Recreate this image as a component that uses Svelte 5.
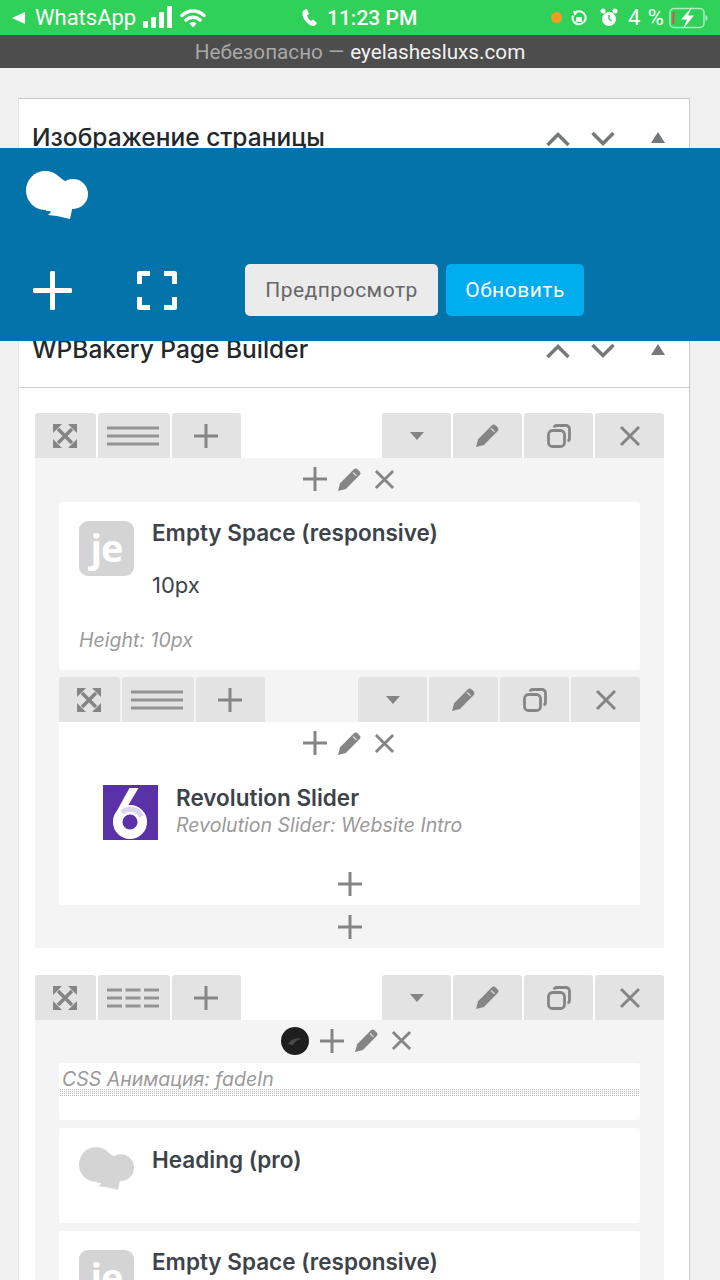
<script>
</script>

{#snippet plus(size)}
	<svg class="ico" width={size} height={size} viewBox="0 0 26 26"><path d="M13 1v24M1 13h24" /></svg>
{/snippet}

{#snippet pencil(size)}
	<svg class="solid" width={size} height={size} viewBox="0 0 24 24">
		<path d="M0 24l2.2-8.2L16.4 1.6a3 3 0 0 1 4.2 0l1.800 1.800a3 3 0 0 1 0 4.200L8.200 21.800z" />
		<path class="cut" d="M15.800 4.700l3.500 3.500" />
	</svg>
{/snippet}

{#snippet cross(size)}
	<svg class="ico" width={size} height={size} viewBox="0 0 22 22"><path d="M2 2l18 18M20 2L2 20" /></svg>
{/snippet}

{#snippet chefLogo(w, h)}
	<svg width={w} height={h} viewBox="0 0 62 48" fill="currentColor">
		<ellipse cx="19" cy="19.500" rx="19" ry="19.500" />
		<circle cx="47" cy="23" r="15" />
		<path d="M20 0C31 1 34 8 40 10.500L47 16 44 40H20z" />
		<path d="M19 34v3l6 4-3 3 9 1 13 3 3-14z" />
	</svg>
{/snippet}

{#snippet sortArrows()}
	<div class="sort">
		<svg width="24" height="14" viewBox="0 0 24 14"><path d="M1.500 13L12 2.500 22.500 13" /></svg>
		<svg width="24" height="14" viewBox="0 0 24 14"><path d="M1.500 1L12 11.500 22.500 1" /></svg>
		<svg class="tri" width="14" height="11" viewBox="0 0 14 11"><path d="M7 0l7 11H0z" /></svg>
	</div>
{/snippet}

{#snippet controls(third)}
	<div class="controls">
		<div class="group left">
			<div class="ctl w61">
				<svg class="ico move" width="24" height="24" viewBox="0 0 24 24">
					<path d="M5 5l14 14M19 5L5 19" />
					<path class="fillin" d="M0 0h9L0 9zM24 0v9l-9-9zM0 24v-9l9 9zM24 24h-9l9-9z" />
				</svg>
			</div>
			<div class="ctl w72">
				{#if third}
					<svg class="lines" width="52" height="20" viewBox="0 0 52 20">
						<path d="M0 2h15M18.500 2h15M37 2h15M0 10h15M18.500 10h15M37 10h15M0 18h15M18.500 18h15M37 18h15" />
					</svg>
				{:else}
					<svg class="lines" width="52" height="20" viewBox="0 0 52 20"><path d="M0 2h52M0 10h52M0 18h52" /></svg>
				{/if}
			</div>
			<div class="ctl w69">{@render plus(26)}</div>
		</div>
		<div class="group">
			<div class="ctl w69">
				<svg class="solid" width="14" height="8" viewBox="0 0 14 8"><path d="M0 0h14L7 8z" /></svg>
			</div>
			<div class="ctl w69">{@render pencil(23)}</div>
			<div class="ctl w69">
				<svg class="ico copy" width="24" height="24" viewBox="0 0 24 24">
					<rect x="1.500" y="6.500" width="16" height="16" rx="4" />
					<path d="M7 3.500a3 3 0 0 1 3-2h9a3.500 3.500 0 0 1 3.500 3.500v9a3 3 0 0 1-2 3" />
				</svg>
			</div>
			<div class="ctl w69">{@render cross(22)}</div>
		</div>
	</div>
{/snippet}

{#snippet colHead()}
	<div class="col-head">
		{@render plus(26)}
		{@render pencil(23)}
		{@render cross(21)}
	</div>
{/snippet}

{#snippet jeIcon()}
	<div class="je"><span>je</span></div>
{/snippet}

<div class="page">
	<div class="statusbar">
		<div class="st-left">
			<svg class="back" width="13" height="12" viewBox="0 0 13 12"><path d="M13 0v12L0 6z" /></svg>
			<span class="st-app">WhatsApp</span>
			<svg class="signal" width="29" height="23" viewBox="0 0 29 23">
				<rect x="0" y="15" width="5" height="7" rx="1" />
				<rect x="8" y="11" width="5" height="11" rx="1" />
				<rect x="16" y="6" width="5" height="16" rx="1" />
				<rect x="24" y="0" width="5" height="22" rx="1" />
			</svg>
			<svg class="wifi" width="26" height="20" viewBox="0 0 26 20">
				<path d="M2 7.500a16 16 0 0 1 22 0M6 12a10.500 10.500 0 0 1 14 0" />
				<path class="wdot" d="M9.500 15.500a5 5 0 0 1 7 0L13 19.500z" />
			</svg>
		</div>
		<div class="st-mid">
			<svg class="phone" width="15" height="17" viewBox="0 0 15 17">
				<path d="M2 1l3-1 2 5-2 1.500c.8 2.500 2 4 4 5.500l2-1.500 4 3.500-2 2.500c-1 1-2.500 .7-4 0C4 14 .8 9 .4 5 .3 3 1 2 2 1z" />
			</svg>
			<span>11:23 PM</span>
		</div>
		<div class="st-right">
			<span class="dot"></span>
			<svg class="lock" width="16" height="18" viewBox="0 0 16 18">
				<path d="M4.500 3.300A6.500 6.500 0 1 1 2 6.500" />
				<path class="lockbody" d="M2 1.500l4.500 2-3 3.500z" />
				<rect class="lockbody" x="5" y="8" width="6" height="5" rx="1" />
			</svg>
			<svg class="alarm" width="18" height="20" viewBox="0 0 18 20">
				<circle cx="9" cy="11" r="7" />
				<circle cx="3" cy="3" r="2.500" />
				<circle cx="15" cy="3" r="2.500" />
				<path class="hand" d="M9 7v4l2.500 2" />
			</svg>
			<span class="pct">4 %</span>
			<svg class="batt" width="40" height="22" viewBox="0 0 40 22">
				<rect class="shell" x="2" y="1.500" width="34" height="19" rx="4" />
				<rect class="level" x="4.500" y="5" width="1.800" height="12" />
				<path class="cap" d="M37.500 8c1.500 .5 2 1.500 2 3s-.5 2.500-2 3z" />
				<path class="bolt" d="M24 0l-11 12.500h6L15 22l11-13.500h-6z" />
			</svg>
		</div>
	</div>

	<div class="addressbar">
		<span class="insecure">Небезопасно —</span>
		<span class="host">eyelashesluxs.com</span>
	</div>

	<main>
		<section class="postbox">
			<div class="box-head first">
				<h2>Изображение страницы</h2>
				{@render sortArrows()}
			</div>
			<div class="covered"></div>
			<div class="box-head second">
				<h2>WPBakery Page Builder</h2>
				{@render sortArrows()}
			</div>

			<div class="builder">
				<div class="vc-row">
					{@render controls(false)}
					<div class="row-body">
						{@render colHead()}
						<div class="el spacer-el">
							{@render jeIcon()}
							<div class="el-text">
								<h4>Empty Space (responsive)</h4>
								<p class="val">10px</p>
							</div>
							<p class="note">Height: 10px</p>
						</div>

						<div class="inner-row">
							{@render controls(false)}
							<div class="inner-body">
								{@render colHead()}
								<div class="slider-el">
									<svg class="rev" width="55" height="55" viewBox="0 0 55 55">
										<rect width="55" height="55" fill="#5a32a8" />
										<path fill="#fff" d="M26.500 3h9L20 29 10.500 37 11 31z" />
										<circle class="six" cx="27" cy="37" r="12.300" />
										<path class="six shade" d="M19 27.500a12.300 12.300 0 0 1 19.500 4" />
									</svg>
									<div class="slider-text">
										<h4>Revolution Slider</h4>
										<p class="note">Revolution Slider: Website Intro</p>
									</div>
								</div>
								<div class="add-line inner-add">{@render plus(26)}</div>
							</div>
						</div>
						<div class="add-line row-add">{@render plus(26)}</div>
					</div>
				</div>

				<div class="vc-row second-row">
					{@render controls(true)}
					<div class="row-body">
						<div class="col-head anim-head">
							<svg class="puck" width="28" height="28" viewBox="0 0 28 28">
								<circle cx="14" cy="14" r="14" fill="#1e1e1e" />
								<path d="M7 17c3-5 9-7 14-5-4 0-7 2-9 6z" fill="#4a4a4a" />
							</svg>
							{@render plus(26)}
							{@render pencil(23)}
							{@render cross(21)}
						</div>
						<div class="anim-section">
							<p class="note">CSS Анимация: fadeIn</p>
							<div class="dots"></div>
						</div>
						<div class="el heading-el">
							<div class="chef">{@render chefLogo(55, 43)}</div>
							<h4>Heading (pro)</h4>
						</div>
						<div class="el last-el">
							{@render jeIcon()}
							<h4>Empty Space (responsive)</h4>
						</div>
					</div>
				</div>
			</div>
		</section>
	</main>

	<div class="toolbar">
		<div class="logo">{@render chefLogo(62, 48)}</div>
		<div class="actions">
			<svg class="tb-plus" width="39" height="39" viewBox="0 0 39 39"><path d="M19.500 2v35M2 19.500h35" /></svg>
			<svg class="tb-full" width="40" height="39" viewBox="0 0 40 39">
				<path d="M2.500 13V2.500H13M27 2.500h10.500V13M37.500 26v10.500H27M13 36.500H2.500V26" />
			</svg>
			<div class="btn preview">Предпросмотр</div>
			<div class="btn update">Обновить</div>
		</div>
	</div>
</div>

<style>
	:global(body) {
		margin: 0;
	}
	.page {
		position: relative;
		width: 720px;
		height: 1280px;
		overflow: hidden;
		background: #f0f0f0;
		font-family: Inter, 'Noto Sans', sans-serif;
	}
	h2,
	h4,
	p {
		margin: 0;
	}

	/* ios bars */
	.statusbar {
		display: grid;
		grid-template-columns: 302px auto 1fr;
		align-items: center;
		height: 35px;
		background: #30d158;
		color: #fff;
		font-family: Roboto, sans-serif;
		font-size: 22px;
	}
	.statusbar svg {
		fill: #fff;
		flex: none;
	}
	.st-left,
	.st-mid,
	.st-right {
		display: flex;
		align-items: center;
	}
	.st-left {
		padding-left: 12px;
	}
	.st-app {
		margin-left: 10px;
		margin-right: 8px;
		width: 100px;
	}
	.wifi {
		margin-left: 8px;
	}
	.wifi path {
		fill: none;
		stroke: #fff;
		stroke-width: 3.5;
		stroke-linecap: round;
	}
	.wifi .wdot {
		fill: #fff;
		stroke: none;
	}
	.st-mid span {
		margin-left: 10px;
		font-size: 21px;
		font-weight: 500;
	}
	.st-right {
		justify-content: flex-end;
		padding-right: 12px;
	}
	.dot {
		width: 11px;
		height: 11px;
		border-radius: 50%;
		background: #f59a23;
		margin-right: 9px;
	}
	.statusbar .lock {
		fill: none;
		margin-right: 13px;
	}
	.lock path {
		stroke: #fff;
		stroke-width: 2;
		fill: none;
	}
	.lock .lockbody {
		fill: #fff;
		stroke: none;
	}
	.alarm .hand {
		fill: none;
		stroke: #30d158;
		stroke-width: 1.500;
	}
	.pct {
		width: 35px;
		margin-left: 10px;
		margin-right: 5px;
		word-spacing: 2px;
		white-space: nowrap;
	}
	.statusbar .batt .shell {
		fill: none;
		stroke: rgba(255, 255, 255, 0.6);
		stroke-width: 1.500;
	}
	.statusbar .batt .level {
		fill: #e5484d;
	}
	.statusbar .batt .cap {
		fill: rgba(255, 255, 255, 0.6);
	}
	.addressbar {
		display: flex;
		justify-content: center;
		align-items: center;
		gap: 6px;
		height: 33px;
		background: #4d4d4d;
		font-family: Roboto, sans-serif;
		font-size: 20.700px;
	}
	.insecure {
		color: #a8a8a8;
	}
	.host {
		color: #f2f2f2;
	}

	/* metabox */
	main {
		padding: 30px 30px 0 18px;
	}
	.postbox {
		background: #fff;
		border: 1px solid #c8c8c8;
		border-left-color: #e2e2e2;
		border-bottom: 0;
	}
	.box-head {
		display: flex;
		align-items: center;
		justify-content: space-between;
		height: 76px;
		padding: 0 24px 0 13px;
	}
	.box-head.second {
		border-bottom: 1px solid #ccd0d4;
	}
	.box-head h2 {
		font-size: 24.500px;
		font-weight: 500;
		color: #23282d;
	}
	.covered {
		height: 136px;
	}
	.sort {
		display: flex;
		align-items: center;
		gap: 21px;
	}
	.sort svg {
		fill: none;
		stroke: #75787b;
		stroke-width: 3.500;
		margin-top: 3px;
	}
	.sort .tri {
		margin-top: 0;
		margin-left: 15px;
		fill: #75787b;
		stroke: none;
	}

	/* wpbakery rows */
	.builder {
		padding: 25px 25px 0 16px;
	}
	.second-row {
		margin-top: 27px;
	}
	.controls {
		display: flex;
		justify-content: space-between;
		height: 45px;
	}
	.group {
		display: flex;
		gap: 2px;
	}
	.group.left svg {
		margin-right: 2px;
	}
	.ctl {
		display: flex;
		align-items: center;
		justify-content: center;
		background: #e3e3e3;
		border-radius: 3px 3px 0 0;
	}
	.w61 {
		width: 61px;
	}
	.w69 {
		width: 69px;
	}
	.w72 {
		width: 72px;
	}
	.ico {
		fill: none;
		stroke: #858585;
		stroke-width: 3;
		flex: none;
	}
	.move {
		stroke-width: 3.500;
	}
	.move .fillin {
		fill: #858585;
		stroke: none;
	}
	.copy {
		stroke-width: 2.800;
	}
	.solid {
		fill: #858585;
		flex: none;
	}
	.solid .cut {
		fill: none;
		stroke: #e3e3e3;
		stroke-width: 1.200;
	}
	.lines {
		fill: none;
		stroke: #939393;
		stroke-width: 3;
	}
	.row-body {
		background: #f4f4f4;
		padding: 0 24px;
	}
	.col-head {
		display: flex;
		align-items: center;
		justify-content: center;
		gap: 10px;
		height: 44px;
		box-sizing: border-box;
		padding: 0 2px 2px 0;
	}
	.col-head > :nth-child(3) {
		margin-left: 3px;
	}
	.anim-head {
		height: 43px;
		padding-right: 7px;
	}
	.anim-head > :nth-child(3) {
		margin-left: 0;
	}
	.anim-head > :nth-child(4) {
		margin-left: 3px;
	}

	/* elements */
	.el {
		background: #fff;
		border-radius: 3px;
		display: grid;
		grid-template-columns: 55px 1fr;
		column-gap: 18px;
		padding: 19px 20px 0;
	}
	.spacer-el {
		height: 168px;
		box-sizing: border-box;
	}
	h4 {
		font-size: 22.500px;
		line-height: 26px;
		font-weight: 600;
		color: #3c434a;
		white-space: nowrap;
	}
	.el h4 {
		margin-top: -1px;
	}
	.el.heading-el h4 {
		margin-top: 0;
	}
	.val {
		margin-top: 26px;
		font-size: 22px;
		line-height: 26px;
		color: #3c434a;
	}
	.note {
		font-size: 19.500px;
		line-height: 22px;
		font-style: italic;
		color: #9a9a9a;
		white-space: nowrap;
	}
	.spacer-el .note {
		grid-column: 1 / -1;
		margin-top: 12px;
	}
	.je {
		display: flex;
		align-items: center;
		justify-content: center;
		width: 55px;
		height: 55px;
		border-radius: 9px;
		background: #d4d4d4;
		color: #fff;
		font-family: 'Open Sans', sans-serif;
		font-size: 38px;
		font-weight: 700;
		letter-spacing: -1px;
		overflow: hidden;
	}
	.je span {
		margin-top: -4px;
	}
	.inner-row {
		margin-top: 7px;
	}
	.inner-body {
		background: #fff;
		height: 183px;
	}
	.slider-el {
		display: flex;
		gap: 18px;
		padding: 19px 0 0 44px;
	}
	.rev {
		flex: none;
	}
	.six {
		fill: none;
		stroke: #fff;
		stroke-width: 9.500;
	}
	.shade {
		stroke: #dcd3ee;
		stroke-width: 5;
	}
	.slider-text .note {
		margin-top: 3px;
	}
	.add-line {
		display: flex;
		justify-content: center;
		align-items: center;
	}
	.inner-add {
		height: 36px;
		margin-top: 26px;
	}
	.row-add {
		height: 43px;
	}
	.anim-section {
		background: #fff;
		height: 57px;
		border-radius: 3px;
		padding-top: 6px;
		box-sizing: border-box;
	}
	.anim-section .note {
		padding-left: 3px;
		line-height: 20px;
	}
	.dots {
		margin-top: -1px;
		height: 8px;
		background-color: #bbb;
		background-image: linear-gradient(90deg, #fff 1px, transparent 1px), linear-gradient(#fff 1px, transparent 1px);
		background-size: 2px 2px;
	}
	.heading-el {
		margin-top: 8px;
		height: 95px;
		box-sizing: border-box;
	}
	.chef {
		color: #d4d4d4;
		line-height: 0;
	}
	.last-el {
		margin-top: 8px;
		height: 100px;
		box-sizing: border-box;
	}

	/* sticky blue toolbar, sits over the metabox */
	.toolbar {
		position: absolute;
		top: 148px;
		left: 0;
		right: 0;
		height: 193px;
		background: #0473aa;
		color: #fff;
	}
	.logo {
		padding: 23px 0 0 26px;
		line-height: 0;
	}
	.actions {
		display: flex;
		align-items: center;
		margin-top: 45px;
		padding-left: 33px;
	}
	.tb-plus,
	.tb-full {
		fill: none;
		stroke: #fff;
		stroke-width: 5;
		flex: none;
	}
	.tb-plus {
		stroke-linecap: round;
	}
	.tb-full {
		margin-left: 65px;
		stroke-linejoin: round;
	}
	.btn {
		display: flex;
		align-items: center;
		justify-content: center;
		height: 52px;
		border-radius: 5px;
		font-family: Roboto, sans-serif;
		font-size: 21px;
		letter-spacing: 0.5px;
	}
	.preview {
		width: 193px;
		margin-left: 68px;
		background: #ebebeb;
		color: #666;
	}
	.update {
		width: 138px;
		margin-left: 8px;
		background: #00aeef;
		color: #fff;
	}
</style>
